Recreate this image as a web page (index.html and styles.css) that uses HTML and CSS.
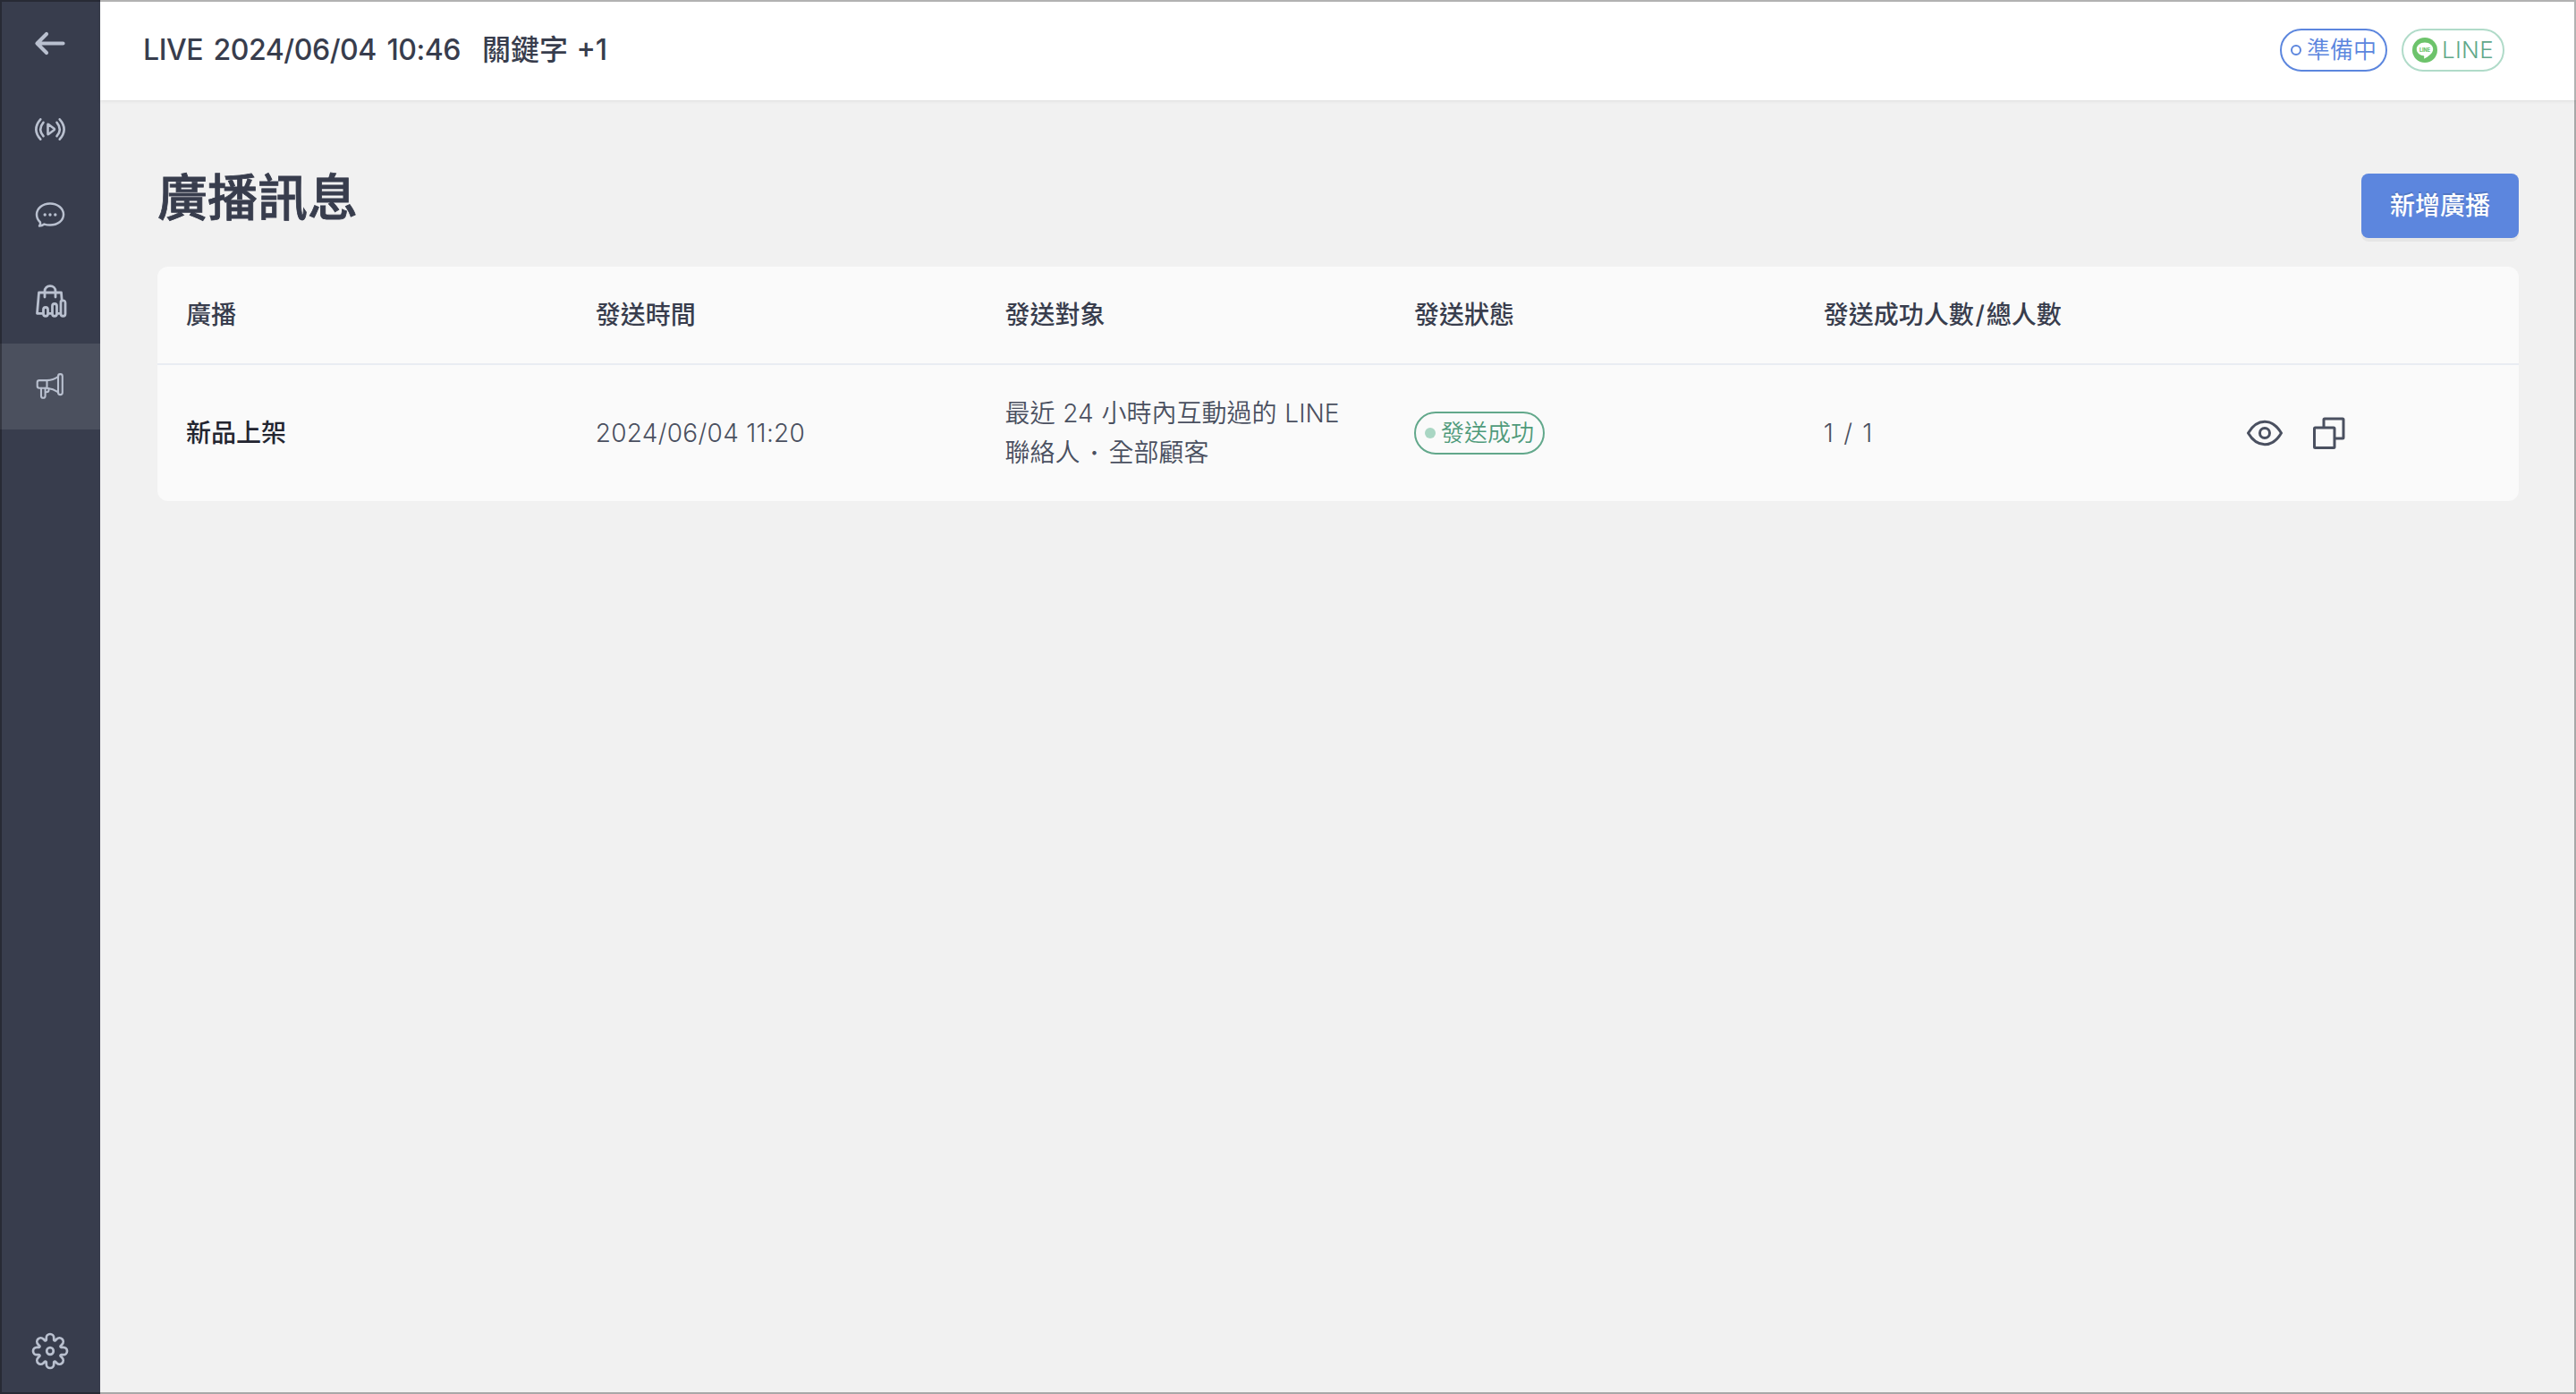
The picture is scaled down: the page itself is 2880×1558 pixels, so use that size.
FILE: index.html
```html
<!DOCTYPE html>
<html lang="zh-Hant">
<head>
    <meta charset="UTF-8">
    <meta name="viewport" content="width=device-width, initial-scale=1.0">
    <title>廣播訊息</title>
    <link rel="stylesheet" href="styles.css">
</head>
<body>
    <div class="app">
        <nav class="sidebar">
            <a class="nav-item" aria-label="返回">
                <svg width="56" height="56" viewBox="0 0 56 56" stroke-width="4.200">
                    <path d="M42.500 28.500H13.500M24 18L13.500 28.500L24 39"/>
                </svg>
            </a>
            <a class="nav-item" aria-label="直播">
                <svg width="56" height="56" viewBox="0 0 56 56" stroke-width="2.600">
                    <path d="M25.500 23.200V33.800Q25.500 34.500 26.200 34L32.500 29.200Q33.300 28.500 32.500 27.800L26.200 23Q25.500 22.500 25.500 23.200Z"/>
                    <path d="M20.500 20.800Q14 28.500 20.500 36.200M17.300 17.300Q7.500 28.500 17.300 39.700M35.500 20.800Q42 28.500 35.500 36.200M38.700 17.300Q48.500 28.500 38.700 39.700"/>
                </svg>
            </a>
            <a class="nav-item" aria-label="訊息">
                <svg width="56" height="56" viewBox="0 0 56 56" stroke-width="2.500">
                    <path d="M17 36.500C14.500 34.200 13 31.200 13 27.800C13 20.900 19.700 15.400 28 15.400S43 20.900 43 27.800S36.300 39.600 28 39.600C25.600 39.600 23.400 39.200 21.500 38.600C20 39.800 18 40.600 16 40.600C17 39.500 17.400 38.200 17 36.500Z"/>
                    <path class="dots" d="M22.200 28h.01M28 28h.01M33.800 28h.01"/>
                </svg>
            </a>
            <a class="nav-item" aria-label="訂單">
                <svg width="56" height="56" viewBox="0 -3.500 56 56" stroke-width="2.800">
                    <path d="M19.500 38.800H13.500L15.500 15.500H40.500L41.200 24.500M29.500 38.800H26.500M38.500 38.800H36.500"/>
                    <path d="M22 20.500V14C22 10.500 24.500 8.200 28 8.200S34 10.500 34 14V20.500"/>
                    <rect x="20.500" y="32" width="5" height="9.800" rx="2.500"/>
                    <rect x="30.500" y="28" width="5" height="13.800" rx="2.500"/>
                    <path d="M40.800 24.500Q45 23.500 45 27V39.300Q45 41.800 42.500 41.800T40 39.300V25.500"/>
                </svg>
            </a>
            <a class="nav-item active" aria-label="廣播">
                <svg width="56" height="56" viewBox="0 0.700 56 56" stroke-width="2.100">
                    <path d="M24.500 21.800H16Q13.700 21.800 13.700 24V28.300Q13.700 30.500 16 30.500H24.500Z"/>
                    <path d="M24.500 21.800Q31.500 21.500 37.200 17.500M24.500 30.500Q31.500 31.300 37.200 35"/>
                    <rect x="37" y="14.800" width="4.800" height="23" rx="2.400"/>
                    <path d="M18 30.500V39.200Q18 41.500 20.300 41.500T22.600 39.200V30.500M22.600 35H24Q26.500 35 26.500 32.800V31"/>
                </svg>
            </a>
            <a class="nav-item settings" aria-label="設定">
                <svg width="56" height="56" viewBox="-28 -28 56 56" stroke-width="2.700">
                    <path d="M-4.200 -12.500V-14.800A4.200 4.200 0 0 1 4.200 -14.800V-12.500A1 1 0 0 0 5.870 -11.810L7.500 -13.440A4.200 4.200 0 0 1 13.440 -7.500L11.810 -5.870A1 1 0 0 0 12.500 -4.200H14.800A4.200 4.200 0 0 1 14.800 4.200H12.500A1 1 0 0 0 11.810 5.870L13.440 7.500A4.200 4.200 0 0 1 7.500 13.440L5.870 11.810A1 1 0 0 0 4.200 12.500V14.800A4.200 4.200 0 0 1 -4.200 14.800V12.500A1 1 0 0 0 -5.870 11.810L-7.500 13.440A4.200 4.200 0 0 1 -13.440 7.500L-11.810 5.870A1 1 0 0 0 -12.500 4.200H-14.800A4.200 4.200 0 0 1 -14.800 -4.200H-12.500A1 1 0 0 0 -11.810 -5.870L-13.440 -7.500A4.200 4.200 0 0 1 -7.500 -13.440L-5.870 -11.810A1 1 0 0 0 -4.200 -12.500Z"/>
                    <circle r="3.800"/>
                </svg>
            </a>
        </nav>
        <div class="content">
            <header class="topbar">
                <div class="live-title">
                    <span>LIVE 2024/06/04 10:46</span>
                    <span class="keyword">關鍵字 +1</span>
                </div>
                <div class="tags">
                    <span class="tag tag-blue"><i class="dot"></i>準備中</span>
                    <span class="tag tag-line">
                        <svg width="28" height="28" viewBox="0 0 28 28">
                            <circle cx="14" cy="14" r="14" fill="#6dc36b"/>
                            <path d="M14 5.500C8.900 5.500 4.800 8.800 4.800 12.900C4.800 16.700 8.300 19.700 12.500 20.300C13.500 20.600 13.300 21.500 13.100 23C13.100 23.600 13.600 23.500 14 23.200C17 21.500 23.200 17.800 23.200 12.900C23.200 8.800 19.100 5.500 14 5.500Z" fill="#fff"/>
                            <text x="14" y="15.600" class="line-logo">LINE</text>
                        </svg>
                        <span class="line-text">LINE</span>
                    </span>
                </div>
            </header>
            <main>
                <div class="page-head">
                    <h1>廣播訊息</h1>
                    <button type="button" class="add-button">新增廣播</button>
                </div>
                <div class="table">
                    <div class="row table-head">
                        <div>廣播</div>
                        <div>發送時間</div>
                        <div>發送對象</div>
                        <div>發送狀態</div>
                        <div>發送成功人數<span class="slash">/</span>總人數</div>
                        <div></div>
                    </div>
                    <div class="row">
                        <div class="name">新品上架</div>
                        <div class="time">2024/06/04 11:20</div>
                        <div class="target">最近 24 小時內互動過的 LINE<br>聯絡人<span class="sep">·</span>全部顧客</div>
                        <div><span class="tag tag-green"><i class="dot"></i>發送成功</span></div>
                        <div class="count">1 / 1</div>
                        <div class="actions">
                            <svg width="40" height="40" viewBox="0 0 40 40">
                                <path d="M1.500 20Q9 7.300 20 7.300T38.500 20Q31 32.700 20 32.700T1.500 20Z"/>
                                <circle cx="20" cy="20" r="5.500"/>
                            </svg>
                            <svg width="40" height="40" viewBox="0 0 40 40">
                                <rect x="3.500" y="14" width="22.500" height="22.500" rx="1"/>
                                <path d="M14 14V5Q14 4 15 4H35Q36 4 36 5V25Q36 26 35 26H26"/>
                            </svg>
                        </div>
                    </div>
                </div>
            </main>
        </div>
    </div>
</body>
</html>
```

FILE: styles.css
```css
* {
    box-sizing: border-box;
}

body {
    margin: 0;
    font-family: Inter, "Noto Sans CJK TC", sans-serif;
    font-size: 28px;
    font-weight: 350;
    line-height: 44px;
    color: #4a5060;
    background-color: #f1f1f1;
}

.app {
    display: flex;
    height: 100vh;
    overflow: hidden;
    position: relative;
}

/* window frame */
.app::after {
    content: "";
    position: absolute;
    inset: 0;
    border: 2px solid rgba(0, 0, 0, 0.3);
    pointer-events: none;
}

.sidebar {
    display: flex;
    flex-direction: column;
    flex: none;
    width: 112px;
    background-color: #383d4d;
}

.nav-item {
    display: flex;
    align-items: center;
    justify-content: center;
    height: 96px;
}

.nav-item.active {
    background-color: #4b505e;
}

.nav-item.settings {
    margin-top: auto;
}

.nav-item svg {
    fill: none;
    stroke: #b9c0cf;
    stroke-linecap: round;
    stroke-linejoin: round;
}

.nav-item .dots {
    stroke-width: 3.4;
}

.content {
    flex: 1;
    min-width: 0;
}

.topbar {
    display: flex;
    align-items: center;
    justify-content: space-between;
    height: 112px;
    padding: 0 80px 0 48px;
    background-color: #fff;
    box-shadow: 0 1px 4px rgba(0, 0, 0, 0.08);
}

.live-title {
    display: flex;
    gap: 24px;
    font-size: 32px;
    font-weight: 500;
    letter-spacing: -0.45px;
    word-spacing: 3.5px;
    color: #383d4d;
}

.keyword {
    letter-spacing: 0;
    word-spacing: 1px;
}

.tags {
    display: flex;
    gap: 16px;
}

.tag {
    display: inline-flex;
    align-items: center;
    height: 48px;
    padding: 0 10px;
    border: 2px solid;
    border-radius: 24px;
    font-size: 26px;
    white-space: nowrap;
    vertical-align: middle;
}

.dot {
    width: 12px;
    height: 12px;
    margin-right: 6px;
    border-radius: 50%;
}

.tag-blue {
    color: #5c86de;
}

.tag-blue .dot {
    border: 2px solid #5c86de;
}

.tag-line {
    width: 115px;
    color: #62a88b;
    border-color: #b0dbc9;
}

.line-text {
    margin-left: 5px;
    letter-spacing: 0.3px;
}

.line-logo {
    font-family: Inter, sans-serif;
    font-size: 5.5px;
    font-weight: 800;
    text-anchor: middle;
    fill: #6dc36b;
}

.tag-green {
    color: #4f9a7b;
    border-color: #62a88b;
}

.tag-green .dot {
    background-color: #a9d6c3;
}

main {
    padding: 82px 64px 0;
}

.page-head {
    display: flex;
    justify-content: space-between;
    height: 104px;
}

h1 {
    margin: 0;
    font-size: 56px;
    font-weight: 500;
    line-height: 55px;
    color: #383d4d;
    -webkit-text-stroke: 0.8px #383d4d;
}

.add-button {
    width: 176px;
    height: 72px;
    padding: 0;
    border: none;
    border-radius: 8px;
    font: inherit;
    font-weight: 500;
    color: #fff;
    background-color: #5c86de;
    box-shadow: 0 4px 0 rgba(0, 0, 0, 0.045);
    text-shadow: 0 -2px 0 rgba(0, 0, 0, 0.12);
    cursor: pointer;
}

.table {
    border-radius: 12px;
    background-color: #fafafa;
}

.row {
    display: grid;
    grid-template-columns: repeat(5, 457.7px) 1fr;
    align-items: center;
    height: 152px;
}

.row > div {
    padding: 0 32px;
}

.table-head {
    height: 110px;
    border-bottom: 2px solid #e9ecf2;
    font-weight: 500;
    color: #383d4d;
}

.slash {
    display: inline-block;
    width: 14px;
    text-align: center;
}

.name {
    font-weight: 500;
    color: #232530;
}

.time {
    letter-spacing: 0.3px;
}

.target {
    word-spacing: 1px;
}

.count {
    word-spacing: 3.5px;
}

.sep {
    display: inline-block;
    width: 32px;
    font-weight: 600;
    text-align: center;
}

.row > .actions {
    display: flex;
    gap: 32px;
    padding: 0 48px;
}

.actions svg {
    fill: none;
    stroke: #4a5060;
    stroke-width: 3;
    stroke-linejoin: round;
}
```
